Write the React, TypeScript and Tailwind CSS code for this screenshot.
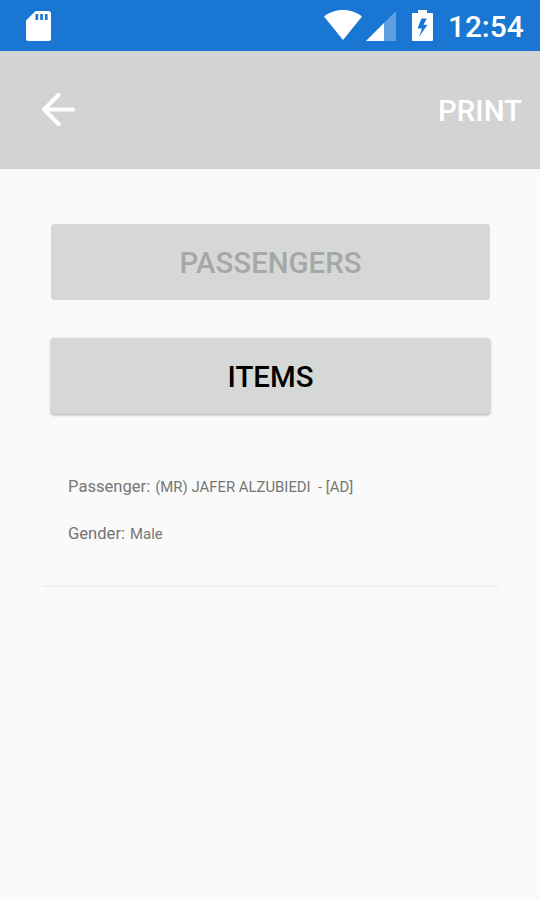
import React from "react";

const SdCardIcon: React.FC = () => (
  <svg width="25" height="30" viewBox="0 0 25 30" fill="#fff">
    <path
      fillRule="evenodd"
      d="M9.5 0H22.5A2.5 2.5 0 0 1 25 2.5V27.5A2.5 2.5 0 0 1 22.5 30H2.5A2.5 2.5 0 0 1 0 27.5V9.5ZM9.5 3V9H12.2V3ZM14.2 3V9H16.9V3ZM18.9 3V9H21.6V3Z"
    />
  </svg>
);

const WifiIcon: React.FC = () => (
  <svg width="38" height="30" viewBox="0 0 38 30" fill="#fff">
    <path d="M19 30L0 6.5C5 2.5 11.5 0 19 0S33 2.5 38 6.5Z" />
  </svg>
);

const SignalIcon: React.FC = () => (
  <svg width="30" height="30" viewBox="0 0 30 30" fill="#fff">
    <path fillOpacity="0.3" d="M0 30H30V0Z" />
    <path d="M0 30H18V12Z" />
  </svg>
);

const BatteryIcon: React.FC = () => (
  <svg width="21" height="31" viewBox="0 0 21 31" fill="#fff">
    <path
      fillRule="evenodd"
      d="M6 0H15V3H20A1 1 0 0 1 21 4V30A1 1 0 0 1 20 31H1A1 1 0 0 1 0 30V4A1 1 0 0 1 1 3H6ZM9.5 8.5L5.5 18.5H10L7 27L15.5 14.8H11.5L14.8 8.5Z"
    />
  </svg>
);

const BackIcon: React.FC = () => (
  <svg
    width="34"
    height="34"
    viewBox="0 0 34 34"
    fill="none"
    stroke="#fff"
    strokeWidth="4"
    strokeLinecap="round"
    strokeLinejoin="round"
  >
    <path d="M32 16.5H3M17.5 2L3 16.5L17.5 31" />
  </svg>
);

const StatusBar: React.FC = () => (
  <div className="flex h-[51px] items-start bg-[#1976d2] pl-[26px] pr-[17px] pt-[11px] text-white">
    <SdCardIcon />
    <div className="ml-auto flex items-start">
      <div className="-mt-px">
        <WifiIcon />
      </div>
      <div className="ml-1">
        <SignalIcon />
      </div>
      <div className="-mt-px ml-4">
        <BatteryIcon />
      </div>
      <span className="ml-[15px] w-[75px] whitespace-nowrap text-[29.8px] font-medium leading-8">
        12:54
      </span>
    </div>
  </div>
);

const Field: React.FC<{ label: string; value: string }> = ({ label, value }) => (
  <p className="flex h-[47px] items-baseline gap-[5px] whitespace-pre text-[#757575]">
    <span className="text-[16.6px] leading-6">{label}</span>
    <span className="text-[14.9px] leading-6">{value}</span>
  </p>
);

const App: React.FC = () => {
  return (
    <div className="h-[900px] w-[540px] overflow-hidden bg-[#fafafa] font-['Roboto',sans-serif]">
      <StatusBar />
      <header className="flex h-[118px] items-center justify-between bg-[#d3d3d3] pl-[41px] pr-[18px]">
        <button className="block">
          <BackIcon />
        </button>
        <button className="pt-0.5 text-[29.4px] font-medium leading-8 text-white">PRINT</button>
      </header>

      <main className="px-[42px] pt-[55px]">
        <div className="flex flex-col gap-[38px] pl-[9px] pr-[8px]">
          <button
            disabled
            className="h-[76px] rounded-[3px] bg-[#d6d8d7] pt-0.5 text-[29.4px] font-medium leading-8 text-[#a6a7a7]"
          >
            PASSENGERS
          </button>
          <button className="h-[76px] rounded-[3px] bg-[#d6d8d7] pt-0.5 text-[29.4px] font-medium leading-8 text-black shadow-[0_1px_3px_rgba(0,0,0,0.35)]">
            ITEMS
          </button>
        </div>

        <section className="mt-[61px] h-[112px] border-b-2 border-[#efefef] pl-[26px]">
          <Field label="Passenger:" value="(MR) JAFER ALZUBIEDI  - [AD]" />
          <Field label="Gender:" value="Male" />
        </section>
      </main>
    </div>
  );
};

export default App;
